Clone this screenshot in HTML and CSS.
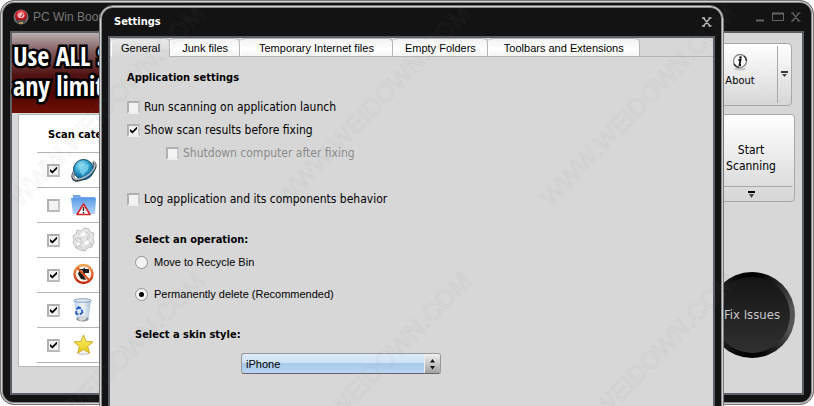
FILE: index.html
```html
<!DOCTYPE html>
<html lang="en">
<head>
<meta charset="utf-8">
<meta name="viewport" content="width=device-width, initial-scale=1">
<title>Settings</title>
<link rel="stylesheet" href="styles.css">
</head>
<body>
<main class="window app">
  <header class="titlebar">
    <svg class="app-logo" viewBox="0 0 16 16" aria-hidden="true">
      <defs><radialGradient id="red" cx=".5" cy=".3" r=".7"><stop offset="0" stop-color="#ff8080"/><stop offset=".5" stop-color="#d81c24"/><stop offset="1" stop-color="#7b0a10"/></radialGradient></defs>
      <circle cx="8" cy="8" r="7.500" fill="#777"/>
      <circle cx="8" cy="7" r="6" fill="url(#red)"/>
      <path d="M4.500 7a3.500 3.500 0 0 1 7 0l-1.500 2h-4z" fill="#efb9bb"/>
      <path d="M8 8l2-3" stroke="#a01018" stroke-width="1"/>
      <path d="M2.500 11h11l-2 3.500h-7z" fill="#4c4c4c"/>
      <path d="M6 14h4" stroke="#d2a548" stroke-width="1.500"/>
    </svg>
    <h1 class="title">PC Win Boos</h1>
    <div class="controls">
      <button class="control" aria-label="Minimize"><svg width="10" height="10" viewBox="0 0 10 10"><path d="M1 8.500h8" stroke="currentColor" stroke-width="2"/></svg></button>
      <button class="control" aria-label="Maximize"><svg width="12" height="10" viewBox="0 0 12 10"><path d="M.5 1.500h11v7H.5z" fill="none" stroke="currentColor" stroke-width="1"/><path d="M0 1.500h12" stroke="currentColor" stroke-width="2"/></svg></button>
      <button class="control" aria-label="Close"><svg width="10" height="10" viewBox="0 0 10 10"><path d="M1.500 1l6.500 8M8 1L1.500 9M0 1h3M6.500 1h3M0 9h3M6.500 9h3" fill="none" stroke="currentColor" stroke-width="1.200"/></svg></button>
    </div>
  </header>
  <div class="client app-client">
    <section class="left">
      <p class="banner">Use ALL S<br>any limita</p>
      <div class="categories">
        <h2 class="categories-title">Scan cate</h2>
        <ul class="category-list">
          <li class="category"><input type="checkbox" class="check" aria-label="Internet" checked>
            <svg class="icon" viewBox="0 0 26 26" aria-hidden="true">
              <defs><radialGradient id="globe" cx=".4" cy=".3" r=".7"><stop offset="0" stop-color="#a8e6f8"/><stop offset=".5" stop-color="#2fa3d0"/><stop offset="1" stop-color="#0a5688"/></radialGradient></defs>
              <path d="M3 15C-1 24 6 25 14 21S27 8 22 5" fill="none" stroke="#36474f" stroke-width="3"/>
              <circle cx="12.500" cy="12.500" r="10" fill="url(#globe)" stroke="#0b4261" stroke-width="1"/>
              <path d="M8 8l3-1 1 4 3-4 3 1-1 5-3 3-2 3-3-4z" fill="#7ed3ec" opacity=".75"/>
              <path d="M3 15c-4 8 3 9 11 5S27 7 22 4" fill="none" stroke="#b4bec2" stroke-width="1.400"/>
            </svg></li>
          <li class="category"><input type="checkbox" class="check" aria-label="Folders">
            <svg class="icon" viewBox="0 0 26 26" aria-hidden="true">
              <defs><linearGradient id="folder" x2="0" y2="1"><stop offset="0" stop-color="#5b9be8"/><stop offset="1" stop-color="#b4d4fa"/></linearGradient></defs>
              <path d="M2 3h7l1 2h14v5H2z" fill="#73a8e8"/>
              <path d="M0 6h25l-1 16H2z" fill="url(#folder)"/>
              <path d="M12.500 12L19 22.500H6z" fill="#fff" stroke="#d4232a" stroke-width="1.600" stroke-linejoin="round"/>
              <path d="M12.500 15v4M12.500 20v1.500" stroke="#222" stroke-width="1.400"/>
            </svg></li>
          <li class="category"><input type="checkbox" class="check" aria-label="Junk" checked>
            <svg class="icon" viewBox="0 0 26 26" aria-hidden="true">
              <path d="M6 3l4 1 3-3 5 1 1 3 4 1-1 5 1 4-2 5-4 1-3 3-5-1-4-2-3-5 1-3-1-4 3-2z" fill="#e6e6e6" stroke="#aaa" stroke-width=".7"/>
              <path d="M6 5l4 4 6-4 3 4-3 5 5 3-6 3-2 4-4-5-4 2 2-6-3-3 5-1 2 5 5-2 1-6M8 20l3-5M12 9l-3 4" fill="none" stroke="#bcbcbc" stroke-width=".7"/>
              <path d="M9 8l4-3 2 2-4 3zM13 15l4-2 1 3-4 2zM6 15l3 2-3 2z" fill="#fff"/>
            </svg></li>
          <li class="category"><input type="checkbox" class="check" aria-label="Blocked items" checked>
            <svg class="icon" viewBox="0 0 26 26" aria-hidden="true">
              <defs><linearGradient id="ban" x2="0" y2="1"><stop offset="0" stop-color="#f3a04a"/><stop offset="1" stop-color="#c3260f"/></linearGradient></defs>
              <circle cx="12.500" cy="12" r="9" fill="#f5f0ea"/>
              <path d="M9 7h3l2-1.500V7h4v4h-4l-1 3 2 4-5-1-3-5z" fill="#1b1b1b"/>
              <path d="M10 8l2 1-2 3z" fill="#fff"/>
              <circle cx="12.500" cy="12" r="9" fill="none" stroke="url(#ban)" stroke-width="2.400"/>
              <path d="M6.500 6l12 12.500" stroke="#d9531e" stroke-width="2"/>
            </svg></li>
          <li class="category"><input type="checkbox" class="check" aria-label="Recycle bin" checked>
            <svg class="icon" viewBox="0 0 26 26" aria-hidden="true">
              <defs><linearGradient id="bin" x2="1" y2="0"><stop offset="0" stop-color="#b8d2ec"/><stop offset=".5" stop-color="#f2f7fc"/><stop offset="1" stop-color="#a9bfd6"/></linearGradient></defs>
              <path d="M3 3h17l-2.500 20q-5.500 3-12 0z" fill="url(#bin)"/>
              <ellipse cx="11.500" cy="22" rx="6" ry="2.500" fill="#8e9296"/>
              <path d="M7 21l4-2 5 1-2 3-5 1z" fill="#d4d6d8"/>
              <ellipse cx="11.500" cy="3.500" rx="8.800" ry="1.800" fill="#dbe8f4" stroke="#7e95ac" stroke-width=".9"/>
              <path d="M5.500 12.500l2-2.500 2.500 1.500M10.500 12.500l1 3-2.500 2M7.500 17.500l-2.500-1 .3-2.500" fill="none" stroke="#1f57c5" stroke-width="1.700"/>
            </svg></li>
          <li class="category"><input type="checkbox" class="check" aria-label="Favorites" checked>
            <svg class="icon" viewBox="0 0 26 26" aria-hidden="true">
              <defs><linearGradient id="star" x2="0" y2="1"><stop offset="0" stop-color="#fff36a"/><stop offset="1" stop-color="#e6c81c"/></linearGradient></defs>
              <ellipse cx="12.500" cy="22" rx="6" ry="1.500" fill="#ddd"/>
              <path d="M12.500 3l2.600 6.500 6.900.4-5.300 4.500 1.900 6.800-6.100-3.700-5.800 3.700 1.700-6.800L3 9.900l6.900-.4z" fill="url(#star)" stroke="#c9a41f" stroke-width=".9" stroke-linejoin="round"/>
            </svg></li>
        </ul>
      </div>
    </section>
    <aside class="actions">
      <div class="split about">
        <button class="split-main">
          <svg width="18" height="18" viewBox="0 0 18 18" aria-hidden="true"><ellipse cx="9" cy="16" rx="6" ry="1.500" fill="#c4c4c4"/><circle cx="9" cy="8" r="6.500" fill="#fff" stroke="#8b8b8b" stroke-width="1.400"/><path d="M3 11a6.500 6.500 0 0 0 5 3.500M13 3a6.500 6.500 0 0 1 2.500 5" fill="none" stroke="#333" stroke-width="1.400"/><circle cx="9.500" cy="4.500" r="1.300" fill="#111"/><path d="M7.500 7h2l-1 5h1.500" fill="none" stroke="#111" stroke-width="1.800"/></svg>
          About
        </button>
        <button class="split-more" aria-label="More about options"><svg width="7" height="7" viewBox="0 0 7 7"><path d="M0 1h7" stroke="#000" stroke-width="1.500"/><path d="M1 3h5L3.500 6z" fill="#444"/></svg></button>
      </div>
      <div class="split start">
        <button class="split-main">Start Scanning</button>
        <button class="split-more" aria-label="More scan options"><svg width="7" height="7" viewBox="0 0 7 7"><path d="M0 1h7" stroke="#000" stroke-width="2"/><path d="M1 3h5L3.500 7z" fill="#444"/></svg></button>
      </div>
      <button class="fix">Fix Issues</button>
    </aside>
  </div>
</main>

<section class="window dialog" role="dialog" aria-labelledby="dialog-title">
  <header class="titlebar">
    <h2 class="title" id="dialog-title">Settings</h2>
    <div class="controls">
      <button class="control" aria-label="Close"><svg width="10" height="10" viewBox="0 0 10 10"><path d="M1.500 1l6.500 8M8 1L1.500 9M0 1h3M6.500 1h3M0 9h3M6.500 9h3" fill="none" stroke="currentColor" stroke-width="1.300"/></svg></button>
    </div>
  </header>
  <div class="client">
    <nav class="tabs" role="tablist">
      <button class="tab active" role="tab" aria-selected="true">General</button>
      <button class="tab" role="tab">Junk files</button>
      <button class="tab wide" role="tab">Temporary Internet files</button>
      <button class="tab" role="tab">Empty Folders</button>
      <button class="tab mid" role="tab">Toolbars and Extensions</button>
    </nav>
    <form class="form">
      <fieldset class="group settings">
        <legend class="heading">Application settings</legend>
        <label class="option"><input type="checkbox" class="check">Run scanning on application launch</label>
        <label class="option"><input type="checkbox" class="check" checked>Show scan results before fixing</label>
        <label class="option nested"><input type="checkbox" class="check" disabled>Shutdown computer after fixing</label>
        <label class="option log"><input type="checkbox" class="check">Log application and its components behavior</label>
      </fieldset>
      <fieldset class="group operation">
        <legend class="heading">Select an operation:</legend>
        <label class="choice"><input type="radio" class="radio" name="operation">Move to Recycle Bin</label>
        <label class="choice"><input type="radio" class="radio" name="operation" checked>Permanently delete (Recommended)</label>
      </fieldset>
      <div class="skin">
        <label class="heading" for="skin">Select a skin style:</label>
        <div class="select-box">
          <select id="skin" class="select"><option>iPhone</option></select>
          <span class="stepper"><svg width="7" height="12" viewBox="0 0 7 12" aria-hidden="true"><path d="M3.500 1L6 4.500H1zM3.500 11.500L6 8H1z" fill="#111"/></svg></span>
        </div>
      </div>
    </form>
  </div>
</section>

<svg class="watermark" width="814" height="406" viewBox="0 0 814 406" aria-hidden="true">
  <text transform="translate(20 208) rotate(-46)">WWW.WEIDOWN.COM</text>
  <text transform="translate(286 208) rotate(-46)">WWW.WEIDOWN.COM</text>
  <text transform="translate(551 208) rotate(-46)">WWW.WEIDOWN.COM</text>
  <text transform="translate(20 475) rotate(-46)">WWW.WEIDOWN.COM</text>
  <text transform="translate(286 475) rotate(-46)">WWW.WEIDOWN.COM</text>
  <text transform="translate(551 475) rotate(-46)">WWW.WEIDOWN.COM</text>
</svg>
</body>
</html>
```
FILE: styles.css
```css
:root {
  --face: #d7d7d7;
  --black: #131313;
  --ui: "DejaVu Sans Condensed", "DejaVu Sans", sans-serif;
  --small: "Liberation Sans", Arial, sans-serif;
}

* { box-sizing: border-box; }

body {
  margin: 0;
  height: 100vh;
  overflow: hidden;
  position: relative;
  background: #fff;
  font: 12px/16px var(--ui);
  color: #000;
}

button {
  margin: 0;
  padding: 0;
  border: 0;
  background: none;
  color: inherit;
  font: inherit;
}

h1, h2, p, ul { margin: 0; padding: 0; }

/* Window chrome */
.window {
  display: flex;
  flex-direction: column;
  background: var(--black);
  border: 1px solid #777;
  border-radius: 14px;
  box-shadow: inset 0 0 0 1px #d4d4d4, inset 0 0 0 2px #85888b;
}

.app {
  height: calc(100vh - 1px);
  padding: 2px 9px 9px;
}

.dialog {
  position: absolute;
  top: 5px;
  left: 99px;
  right: 90px;
  bottom: -24px;
  padding: 2px 8px 8px;
}

.titlebar {
  display: flex;
  align-items: center;
  height: 28px;
  flex: none;
}

.title {
  flex: 1;
  font: bold 11px/16px var(--ui);
  color: #fff;
}

.dialog .title { padding-left: 6px; }

.app .title {
  font: 12px/16px var(--small);
  color: #777;
}

.app-logo {
  width: 16px;
  height: 16px;
  margin: 0 4px 0 3px;
}

.controls {
  display: flex;
  gap: 7px;
  padding-right: 3px;
  color: #666;
}

.dialog .controls { color: #bbb; }
.control { display: flex; }

.client {
  flex: 1;
  min-height: 0;
  background: var(--face);
  border: 2px solid #5b6067;
}

/* Main window */
.app-client {
  display: grid;
  grid-template-columns: 1fr 97px;
}

.left { display: flex; flex-direction: column; min-width: 0; }

.banner {
  height: 80px;
  padding: 8px 1px;
  background: linear-gradient(#b9aeb0 0, #7d5658 20px, #501311 42px, #4b0502 60px, #701006 80px);
  color: #fff;
  font: bold 26px/30px "Liberation Sans Narrow", "Open Sans Condensed", "Liberation Sans", sans-serif;
  -webkit-text-stroke: 5px #000;
  paint-order: stroke fill;
}

.categories {
  margin: 1px 0 0 6px;
  padding: 12px 0 3px 18px;
  background: #fff;
  border: 1px solid #b8b8b8;
}

.categories-title {
  padding-left: 11px;
  font: bold 11px/16px var(--ui);
}

.category-list {
  margin-top: 9px;
  list-style: none;
  border-bottom: 1px solid #b5b5b5;
}

.category {
  display: flex;
  align-items: center;
  gap: 11px;
  height: 35px;
  padding-left: 10px;
  border-top: 1px solid #b5b5b5;
}

.icon { width: 26px; height: 26px; }

.actions {
  display: flex;
  flex-direction: column;
  align-items: flex-end;
  padding: 10px 7px;
}

.split {
  display: flex;
  border: 1px solid #a8a8a8;
  border-radius: 4px;
  background: linear-gradient(#fff, #d6d6d6);
}

.split-main {
  display: flex;
  flex-direction: column;
  align-items: center;
  justify-content: center;
  flex: 1;
}

.split-more { display: flex; align-items: center; justify-content: center; }

.about { width: 90px; height: 63px; margin-right: 3px; }
.about .split-main { gap: 2px; font-size: 11px; padding-bottom: 8px; }
.about .split-more { width: 14px; margin: 2px 0; border-left: 1px solid #a8a8a8; }

.start { flex-direction: column; width: 88px; height: 88px; margin-top: 8px; }
.start .split-main { padding: 14px 12px 0; }
.start .split-more { height: 15px; margin: 0 2px; border-top: 1px solid #a8a8a8; }

.fix {
  position: relative;
  isolation: isolate;
  width: 86px;
  height: 86px;
  margin-top: 70px;
  border-radius: 50%;
  background: conic-gradient(#000 10deg, #555 80deg, #555 110deg, #000 170deg, #000 190deg, #444 270deg, #000 350deg);
  color: #c8c8c8;
  font-size: 13px;
}

.fix::before {
  content: "";
  position: absolute;
  inset: 5px;
  z-index: -1;
  border-radius: 50%;
  background: linear-gradient(#151515, #303030);
}

/* Tabs */
.tabs {
  display: flex;
  height: 19px;
  padding-left: 1px;
  border-bottom: 1px solid #b5b5b5;
}

.tab {
  padding: 0 11px;
  background: linear-gradient(#f2f2f2, #fff 60%, #f4f4f4);
  border: 1px solid #b5b5b5;
  border-left-color: #fff;
  border-bottom: 0;
  border-radius: 5px 5px 0 0;
  font: 11px/18px var(--small);
}

.tab.wide { padding: 0 18px; }
.tab.mid { padding: 0 15px; }

.tab.active {
  height: 19px;
  padding: 0 9px;
  background: linear-gradient(#e8e8e8, var(--face));
}

/* Form */
.form { padding: 13px 17px; }

.group {
  display: flex;
  flex-direction: column;
  align-items: flex-start;
  min-width: 0;
  margin: 0;
  padding: 0;
  border: 0;
}

.heading {
  display: block;
  padding: 0;
  font: bold 11px/16px var(--ui);
}

.settings { gap: 7px; }
.settings .heading { margin-bottom: 13px; }

.option {
  display: flex;
  align-items: center;
  gap: 4px;
}

.nested { margin-left: 39px; color: #8b8b8b; }
.log { margin-top: 23px; }

.operation { padding-left: 8px; margin-top: 25px; gap: 16px; }
.operation .heading { margin-bottom: 6px; }

.choice {
  display: flex;
  align-items: center;
  gap: 6px;
  font: 11px/16px var(--small);
}

.check, .radio {
  appearance: none;
  flex: none;
  display: grid;
  place-items: center;
  width: 13px;
  height: 13px;
  margin: 0;
  background: #f3f3f3;
  border: 2px solid #aeb0b4;
  border-right-color: #c6c7c9;
  border-bottom-color: #eee;
}

.categories .check { border-bottom-color: #b8babd; }

.check:checked::after {
  content: "";
  width: 7px;
  height: 7px;
  background: #000;
  clip-path: polygon(0 35%, 35% 65%, 100% 0, 100% 35%, 35% 100%, 0 70%);
}

.radio {
  border: 1px solid #909296;
  border-radius: 50%;
}

.radio:checked::after {
  content: "";
  width: 5px;
  height: 5px;
  border-radius: 50%;
  background: #000;
}

.skin { margin-top: 25px; padding-left: 8px; }

.select-box {
  position: relative;
  width: 200px;
  height: 21px;
  margin: 10px 0 0 106px;
}

.select {
  appearance: none;
  width: 100%;
  height: 100%;
  padding: 0 4px;
  border: 1px solid #999;
  border-bottom-color: #666;
  border-radius: 3px;
  background: linear-gradient(#dceaf8 0, #cfe2f6 45%, #a9c9eb 50%, #b8d6f4 100%);
  font: 11px/18px var(--small);
  color: #000;
}

.stepper {
  position: absolute;
  top: 1px;
  right: 1px;
  bottom: 1px;
  width: 16px;
  display: grid;
  place-items: center;
  background: linear-gradient(#f0f0f0, #a2a2a2);
  border-left: 1px solid #eee;
  border-radius: 0 2px 2px 0;
  pointer-events: none;
}

.watermark {
  position: absolute;
  top: 0;
  left: 0;
  pointer-events: none;
  font: 25px var(--small);
  fill: none;
  stroke: #808080;
  stroke-opacity: .1;
  stroke-width: 1;
}
```
